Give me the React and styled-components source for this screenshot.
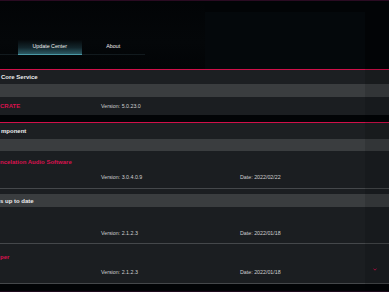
import styled, { createGlobalStyle } from "styled-components"

const GlobalStyle = createGlobalStyle`
  html, body {
    margin: 0;
    padding: 0;
    background: #020406;
    font-family: "Liberation Sans", Arial, sans-serif;
  }
  * { box-sizing: border-box; }
`

const sections = [
  {
    title: "Core Service",
    titleHeight: 14,
    barHeight: 13,
    items: [{ name: "CRATE", version: "5.0.23.0", inline: true }],
  },
  {
    title: "mponent",
    titleHeight: 16,
    barHeight: 12,
    items: [
      { name: "ncelation Audio Software", version: "3.0.4.0.9", date: "2022/02/22", height: 38 },
    ],
    group: {
      title: "s up to date",
      items: [
        { name: "", version: "2.1.2.3", date: "2022/01/18", height: 37 },
        { name: "per", version: "2.1.2.3", date: "2022/01/18", height: 40, pad: 9, chevron: true },
      ],
    },
  },
]

const ItemRow = ({ item }) => {
  if (item.inline) {
    return (
      <InlineItem>
        <Name>{item.name}</Name>
        <Meta>Version: {item.version}</Meta>
      </InlineItem>
    )
  }
  return (
    <Item $height={item.height} $pad={item.pad}>
      <Name>{item.name}</Name>
      <MetaLine>
        <Meta>Version: {item.version}</Meta>
        <Meta>Date: {item.date}</Meta>
        {item.chevron && (
          <Chevron width="4" height="3" viewBox="0 0 4 3">
            <path d="M0.5 0.6 L2 2.2 L3.5 0.6" fill="none" stroke="#c8104a" strokeWidth="0.9" />
          </Chevron>
        )}
      </MetaLine>
    </Item>
  )
}

const App = () => {
  return (
    <Page>
      <GlobalStyle />
      <TopRule />
      <Head>
        <TabSide>
          <TabBar>
            <Tab $active>Update Center</Tab>
            <Tab>About</Tab>
          </TabBar>
        </TabSide>
        <Panel />
      </Head>
      <List>
        {sections.map((section, i) => (
          <Section key={section.title}>
            {i > 0 && <Gap />}
            <PinkRule />
            <SectionTitle $height={section.titleHeight}>{section.title}</SectionTitle>
            <ColumnBar $height={section.barHeight} />
            {section.items.map((item, j) => (
              <ItemRow key={j} item={item} />
            ))}
            {section.group && (
              <>
                <DarkStrip />
                <GroupBar>{section.group.title}</GroupBar>
                {section.group.items.map((item, j) => (
                  <ItemRow key={j} item={item} />
                ))}
              </>
            )}
          </Section>
        ))}
      </List>
      <BottomRule />
    </Page>
  )
}

const Page = styled.div`
  width: 389px;
  height: 292px;
  overflow: hidden;
  display: flex;
  flex-direction: column;
  background: #020406;
`

const TopRule = styled.div`
  height: 1px;
  background: #2a0b22;
`

const Head = styled.div`
  height: 68px;
  display: flex;
  background: #020406;
`

const TabSide = styled.div`
  width: 205px;
  padding-top: 39px;
  background: linear-gradient(180deg, #020406 0%, #040709 60%, #020406 100%);
`

const TabBar = styled.div`
  width: 145px;
  height: 15px;
  display: flex;
  padding-left: 18px;
  border-bottom: 1px solid #121a1e;
`

const Tab = styled.div`
  width: 64px;
  height: 15px;
  display: flex;
  align-items: center;
  justify-content: center;
  padding-bottom: 2px;
  font-size: 5.3px;
  color: #f0f0f0;
  background: ${({ $active }) =>
    $active ? "linear-gradient(180deg, #05080a 0%, #13262c 55%, #2c5a64 100%)" : "transparent"};
  border-bottom: 1px solid ${({ $active }) => ($active ? "#4a99a6" : "transparent")};
`

const Panel = styled.div`
  width: 160px;
  margin-top: 11px;
  background: #04080b;
`

const List = styled.div`
  flex: 1;
  display: flex;
  flex-direction: column;
  position: relative;
  &::after {
    content: "";
    position: absolute;
    top: 0;
    bottom: 0;
    right: 0;
    width: 24px;
    background: rgba(0, 0, 0, 0.12);
    pointer-events: none;
  }
`

const Section = styled.section`
  display: flex;
  flex-direction: column;
`

const Gap = styled.div`
  height: 7px;
  background: #020406;
`

const PinkRule = styled.div`
  height: 1px;
  background: #d0104a;
`

const SectionTitle = styled.div`
  height: ${({ $height }) => $height}px;
  display: flex;
  align-items: center;
  padding-left: 1px;
  background: #1c1f22;
  color: #ececec;
  font-size: 6px;
  font-weight: 700;
`

const ColumnBar = styled.div`
  height: ${({ $height }) => $height}px;
  background: #3a3d3f;
`

const InlineItem = styled.div`
  height: 18px;
  display: grid;
  grid-template-columns: 101px 1fr;
  align-items: center;
  background: #1b1e21;
`

const Item = styled.div`
  height: ${({ $height }) => $height}px;
  display: flex;
  flex-direction: column;
  padding-top: ${({ $pad }) => $pad || 7}px;
  background: #1b1e21;
  border-bottom: 1px solid #45484b;
`

const Name = styled.div`
  height: 8px;
  line-height: 8px;
  font-size: 6px;
  font-weight: 700;
  color: #d8124e;
  white-space: nowrap;
`

const MetaLine = styled.div`
  margin-top: 7px;
  height: 8px;
  display: grid;
  grid-template-columns: 139px 133px 1fr;
  align-items: center;
  padding-left: 101px;
`

const Meta = styled.div`
  line-height: 8px;
  font-size: 5.3px;
  color: #cfd0d1;
  white-space: nowrap;
`

const Chevron = styled.svg`
  display: block;
  margin-top: -6px;
`

const DarkStrip = styled.div`
  height: 5px;
  background: #1b1e21;
`

const GroupBar = styled.div`
  height: 13px;
  display: flex;
  align-items: center;
  background: #3a3d3f;
  color: #ececec;
  font-size: 6px;
  font-weight: 700;
`

const BottomRule = styled.div`
  height: 1px;
  background: #1e0a1c;
`

export default App
